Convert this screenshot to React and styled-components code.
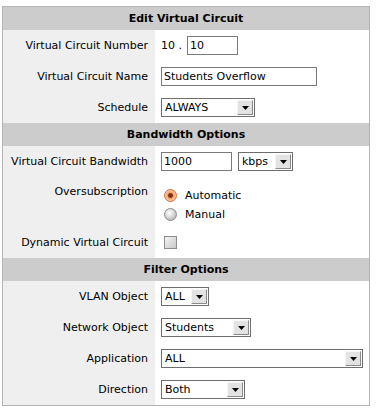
import React from "react";
import styled, { createGlobalStyle } from "styled-components";

const Global = createGlobalStyle`
  html, body { margin: 0; padding: 0; background: #ffffff; }
  body {
    font-family: "DejaVu Sans", Verdana, sans-serif;
    font-size: 11px;
    color: #000;
  }
`;

const Page = styled.div`
  padding: 6px 0 0 2px;
`;

const Panel = styled.div`
  width: 366px;
  border: 1px solid #b4b4b4;
  background: #fff;
`;

const SectionHeader = styled.div`
  height: 23px;
  background: #cccccc;
  display: flex;
  align-items: center;
  justify-content: center;
  font-weight: bold;
`;

const Row = styled.div`
  display: grid;
  grid-template-columns: 152px 1fr;
  min-height: ${(p) => p.$h || 31}px;
`;

const Label = styled.div`
  background: #efefef;
  display: flex;
  justify-content: flex-end;
  align-items: ${(p) => (p.$top ? "flex-start" : "center")};
  padding: ${(p) => (p.$top ? "8px 7px 0 0" : "0 7px 0 0")};
  white-space: nowrap;
`;

const Field = styled.div`
  display: flex;
  flex-direction: ${(p) => (p.$column ? "column" : "row")};
  align-items: ${(p) => (p.$column ? "flex-start" : "center")};
  padding: ${(p) => (p.$column ? "9px 0 0 6px" : "0 0 0 6px")};
`;

const Prefix = styled.span`
  margin-right: 5px;
`;

const TextBox = styled.div`
  box-sizing: border-box;
  width: ${(p) => p.$w}px;
  height: 19px;
  border: 1px solid #7a7a7a;
  padding: 0 2px;
  display: flex;
  align-items: center;
  background: #fff;
`;

const SelectBox = styled.div`
  box-sizing: border-box;
  width: ${(p) => p.$w}px;
  height: 19px;
  border: 1px solid #6e6e6e;
  display: flex;
  align-items: center;
  background: #fff;
  padding: 1px;
  margin-left: ${(p) => p.$ml || 0}px;
`;

const SelectValue = styled.span`
  flex: 1;
  padding-left: 2px;
  white-space: nowrap;
  overflow: hidden;
`;

const ArrowBtn = styled.span`
  box-sizing: border-box;
  width: 16px;
  height: 15px;
  background: #e3e3e3;
  border-top: 1px solid #f6f6f6;
  border-left: 1px solid #f6f6f6;
  border-right: 1px solid #8a8a8a;
  border-bottom: 1px solid #8a8a8a;
  display: flex;
  align-items: center;
  justify-content: center;
`;

const RadioLine = styled.label`
  display: flex;
  align-items: center;
  gap: 8px;
  height: 19px;
`;

const RadioDot = styled.span`
  box-sizing: border-box;
  width: 13px;
  height: 13px;
  border-radius: 50%;
  margin-left: 3px;
  border: 1px solid ${(p) => (p.$on ? "#d0703a" : "#8c8c8c")};
  background: ${(p) =>
    p.$on
      ? "radial-gradient(circle at 50% 50%, #6a2a10 0, #8a3a18 2px, #f0a070 3px, #ffd2b0 6px)"
      : "radial-gradient(circle at 40% 35%, #ffffff 0, #e6e6e6 3px, #bdbdbd 7px)"};
`;

const CheckBox = styled.span`
  box-sizing: border-box;
  width: 13px;
  height: 13px;
  margin-left: 3px;
  border: 1px solid #8c8c8c;
  background: linear-gradient(135deg, #f4f4f4, #c8c8c8);
`;

function Arrow() {
  return (
    <ArrowBtn>
      <svg width="7" height="4" viewBox="0 0 7 4">
        <path d="M0 0 H7 L3.5 4 Z" fill="#000" />
      </svg>
    </ArrowBtn>
  );
}

function Select({ w, value, ml }) {
  return (
    <SelectBox $w={w} $ml={ml}>
      <SelectValue>{value}</SelectValue>
      <Arrow />
    </SelectBox>
  );
}

export default function App() {
  return (
    <Page>
      <Global />
      <Panel>
        <SectionHeader>Edit Virtual Circuit</SectionHeader>
        <Row>
          <Label>Virtual Circuit Number</Label>
          <Field>
            <Prefix>10 .</Prefix>
            <TextBox $w={51}>10</TextBox>
          </Field>
        </Row>
        <Row>
          <Label>Virtual Circuit Name</Label>
          <Field>
            <TextBox $w={156}>Students Overflow</TextBox>
          </Field>
        </Row>
        <Row>
          <Label>Schedule</Label>
          <Field>
            <Select w={94} value="ALWAYS" />
          </Field>
        </Row>

        <SectionHeader>Bandwidth Options</SectionHeader>
        <Row>
          <Label>Virtual Circuit Bandwidth</Label>
          <Field>
            <TextBox $w={71}>1000</TextBox>
            <Select w={55} value="kbps" ml={6} />
          </Field>
        </Row>
        <Row $h={49}>
          <Label $top>Oversubscription</Label>
          <Field $column>
            <RadioLine>
              <RadioDot $on />
              Automatic
            </RadioLine>
            <RadioLine>
              <RadioDot />
              Manual
            </RadioLine>
          </Field>
        </Row>
        <Row $h={32}>
          <Label>Dynamic Virtual Circuit</Label>
          <Field>
            <CheckBox />
          </Field>
        </Row>

        <SectionHeader>Filter Options</SectionHeader>
        <Row>
          <Label>VLAN Object</Label>
          <Field>
            <Select w={48} value="ALL" />
          </Field>
        </Row>
        <Row>
          <Label>Network Object</Label>
          <Field>
            <Select w={90} value="Students" />
          </Field>
        </Row>
        <Row>
          <Label>Application</Label>
          <Field>
            <Select w={202} value="ALL" />
          </Field>
        </Row>
        <Row>
          <Label>Direction</Label>
          <Field>
            <Select w={84} value="Both" />
          </Field>
        </Row>
      </Panel>
    </Page>
  );
}
